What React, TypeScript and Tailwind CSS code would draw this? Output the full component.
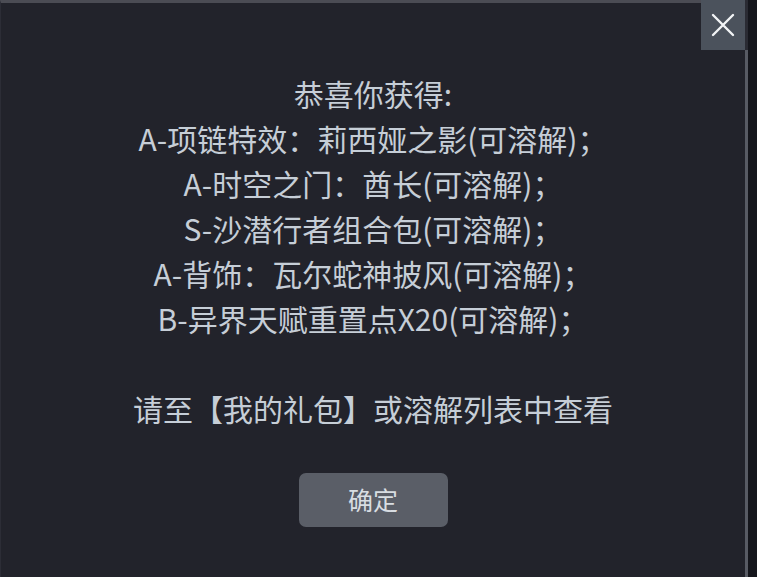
import React from "react";

const lines = [
  "恭喜你获得:",
  "A-项链特效：莉西娅之影(可溶解)；",
  "A-时空之门：酋长(可溶解)；",
  "S-沙潜行者组合包(可溶解)；",
  "A-背饰：瓦尔蛇神披风(可溶解)；",
  "B-异界天赋重置点X20(可溶解)；",
  "\u00a0",
  "请至【我的礼包】或溶解列表中查看",
];

export default function App() {
  return (
    <div
      className="w-[757px] h-[577px] flex bg-[#15161c] overflow-hidden"
      style={{ fontFamily: '"Noto Sans CJK SC", "Noto Sans", sans-serif' }}
    >
      <div className="relative w-[748px] h-full flex flex-col bg-[#22232b] border-t-[3px] border-t-[#4b4c54] border-l border-l-[#2c2d36] border-r-[3px] border-r-[#585b64]">
        <button className="absolute top-[-3px] right-[-3px] w-[47px] h-[50px] bg-[#4b525c] flex items-center justify-center border-r-[3px] border-r-[#2a2b33]">
          <svg width="26" height="26" viewBox="0 0 26 26">
            <path d="M3 3 L23 23 M23 3 L3 23" stroke="#f2f4f6" strokeWidth="2.4" strokeLinecap="round" />
          </svg>
        </button>
        <div className="flex flex-col items-center pt-[68px] text-[#c6ced7] text-[30px] leading-[45px]">
          {lines.map((l, i) => (
            <div key={i} className="whitespace-pre">{l}</div>
          ))}
        </div>
        <div className="flex justify-center mt-[42px]">
          <button className="w-[149px] h-[54px] rounded-[7px] bg-[#5a5e67] text-[#d8dde2] text-[25px] flex items-center justify-center">
            确定
          </button>
        </div>
      </div>
    </div>
  );
}
